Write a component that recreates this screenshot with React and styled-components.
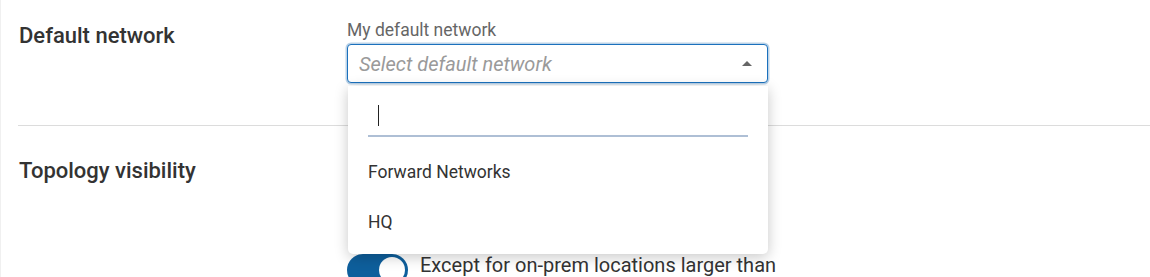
import styled, { createGlobalStyle } from "styled-components";

const GlobalStyle = createGlobalStyle`
  html, body {
    margin: 0;
    padding: 0;
    background: #ffffff;
    font-family: Roboto, "Liberation Sans", Arial, sans-serif;
    color: #333333;
  }
`;

const Page = styled.div`
  width: 1150px;
  height: 277px;
  overflow: hidden;
  box-sizing: border-box;
  border-left: 1px solid #f0f0f0;
  padding-left: 17px;
`;

const Section = styled.div`
  display: grid;
  grid-template-columns: 329px 421px;
  padding-top: ${(p) => p.$top}px;
  height: ${(p) => p.$height}px;
  box-sizing: border-box;
`;

const Heading = styled.h2`
  margin: 0;
  padding-left: 1px;
  padding-top: ${(p) => p.$top}px;
  font-size: 22px;
  line-height: 26px;
  font-weight: 500;
  color: #333333;
`;

const Field = styled.div`
  display: flex;
  flex-direction: column;
`;

const Label = styled.label`
  font-size: 17.5px;
  line-height: 20px;
  color: #666666;
  margin-bottom: 4px;
`;

const SelectWrap = styled.div`
  position: relative;
`;

const SelectBox = styled.div`
  height: 39px;
  box-sizing: border-box;
  display: flex;
  align-items: center;
  justify-content: space-between;
  padding: 0 15px 0 11px;
  border: 1px solid #1b71bd;
  border-radius: 4px;
  box-shadow: 0 0 0 1.5px #bcd3e8;
  background: #fff;
`;

const Placeholder = styled.span`
  font-size: 20px;
  font-style: italic;
  color: #9a9a9a;
`;

const Arrow = styled.span`
  width: 0;
  height: 0;
  border-left: 5px solid transparent;
  border-right: 5px solid transparent;
  border-bottom: 5px solid #666;
  margin-top: -1px;
`;

const Menu = styled.div`
  position: absolute;
  top: calc(100% + 3px);
  left: 1px;
  right: 0;
  height: 168px;
  box-sizing: border-box;
  background: #fff;
  border-radius: 0 0 5px 5px;
  box-shadow: 0 3px 14px rgba(0, 0, 0, 0.22);
  padding: 19px 20px 0 20px;
  z-index: 5;
`;

const Search = styled.div`
  height: 30px;
  border-bottom: 2px solid #aebfd5;
  padding-left: 10px;
  display: flex;
  align-items: flex-start;
`;

const Caret = styled.span`
  width: 1px;
  height: 21px;
  background: #222;
`;

const Options = styled.div`
  padding-top: 10px;
`;

const Option = styled.div`
  font-size: 17.5px;
  line-height: 20px;
  color: #333;
  height: 50px;
  display: flex;
  align-items: center;
`;

const Divider = styled.hr`
  margin: 0;
  border: none;
  border-top: 1px solid #dcdcdc;
`;

const ToggleRow = styled.div`
  display: flex;
  align-items: flex-start;
  gap: 12px;
  margin-top: ${(p) => p.$top}px;
  white-space: nowrap;
`;

const Toggle = styled.div`
  width: 61px;
  height: 32px;
  border-radius: 16px;
  background: #0e5f9c;
  position: relative;
  flex-shrink: 0;

  &::after {
    content: "";
    position: absolute;
    right: 3px;
    top: 3px;
    width: 26px;
    height: 26px;
    border-radius: 50%;
    background: #fff;
  }
`;

const ToggleText = styled.span`
  font-size: 20px;
  line-height: 22px;
  color: #333;
`;

const App = () => {
  return (
    <Page>
      <GlobalStyle />
      <Section $top={20} $height={125}>
        <Heading $top={3}>Default network</Heading>
        <Field>
          <Label>My default network</Label>
          <SelectWrap>
            <SelectBox>
              <Placeholder>Select default network</Placeholder>
              <Arrow />
            </SelectBox>
            <Menu>
              <Search>
                <Caret />
              </Search>
              <Options>
                <Option>Forward Networks</Option>
                <Option>HQ</Option>
              </Options>
            </Menu>
          </SelectWrap>
        </Field>
      </Section>
      <Divider />
      <Section $top={32} $height={160}>
        <Heading $top={0}>Topology visibility</Heading>
        <Field>
          <ToggleRow $top={96}>
            <Toggle />
            <ToggleText>Except for on-prem locations larger than</ToggleText>
          </ToggleRow>
        </Field>
      </Section>
    </Page>
  );
};

export default App;
